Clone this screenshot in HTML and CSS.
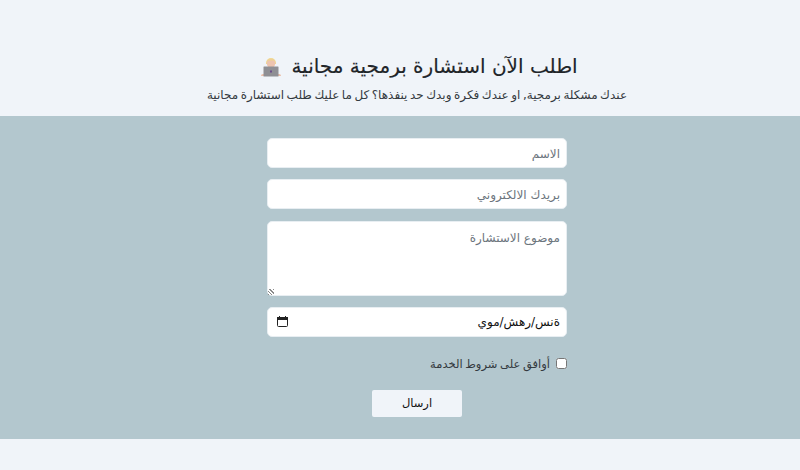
FILE: index.html
```html
<!DOCTYPE html>
<html lang="ar" dir="rtl">
<head>
  <meta charset="UTF-8" />
  <title>استشارة برمجية</title>
  <link rel="stylesheet" href="styles.css">
</head>
<body>

<div class="intro">
  <h1>
    <span>اطلب الآن استشارة برمجية مجانية</span>
    <svg class="coder" width="22" height="22" viewBox="0 0 22 22">
      <path d="M6 8a5 5 0 0 1 10 0v1H6z" fill="#f0d890"/>
      <ellipse cx="11" cy="8.500" rx="4.200" ry="4.500" fill="#edc4b0"/>
      <path d="M6.500 6.500a5 4 0 0 1 9 0l-1.500-1h-6z" fill="#efd68a"/>
      <rect x="8" y="13" width="6" height="2" fill="#e0b09a"/>
      <path d="M1 21a2 2 0 0 1 2-2h16a2 2 0 0 1 2 2z" fill="#eabda8"/>
      <rect x="3.500" y="11.500" width="15" height="10" rx="0.500" fill="#8f8f94"/>
      <rect x="10" y="15.500" width="2" height="2" fill="#6b4c8a"/>
    </svg>
  </h1>
  <p>عندك مشكلة برمجية, او عندك فكرة وبدك حد ينفذها؟ كل ما عليك طلب استشارة مجانية</p>
</div>

<div class="band">
  <form class="consult-form">
    <input class="field" type="text" placeholder="الاسم" />
    <input class="field" type="email" placeholder="بريدك الالكتروني" />
    <textarea class="field area" placeholder="موضوع الاستشارة"></textarea>
    <div class="field date-field">
      <span>ةنس/رهش/موي</span>
      <svg width="11" height="11" viewBox="0 0 11 11">
        <rect x="0.500" y="1.500" width="10" height="9" rx="1" fill="none" stroke="#222"/>
        <rect x="0" y="1" width="11" height="3" fill="#222"/>
        <rect x="2" y="0" width="1" height="2" fill="#222"/>
        <rect x="8" y="0" width="1" height="2" fill="#222"/>
      </svg>
    </div>
    <label class="terms">
      <input type="checkbox" />
      <span>أوافق على شروط الخدمة</span>
    </label>
    <button class="send" type="button">ارسال</button>
  </form>
</div>

</body>
</html>
```

FILE: styles.css
```css
* { box-sizing: border-box; margin: 0; padding: 0; }
body {
  background-color: #f0f4f9;
  font-family: "DejaVu Sans", sans-serif;
  color: #212529;
  height: 470px;
  overflow: hidden;
}
.intro {
  height: 116px;
  padding-top: 50px;
  padding-left: 34px;
  text-align: center;
}
.intro h1 {
  display: flex;
  justify-content: center;
  align-items: center;
  gap: 9px;
  padding-left: 4px;
  font-size: 20px;
  font-weight: 400;
  line-height: 32px;
  -webkit-text-stroke: 0.15px #212529;
}
.intro p {
  font-size: 12px;
  line-height: 26px;
  word-spacing: -1.300px;
  color: #343a40;
}
.band {
  background-color: #b3c7ce;
  height: 323px;
  padding-top: 22px;
  padding-left: 34px;
}
.consult-form {
  width: 300px;
  margin: 0 auto;
  display: flex;
  flex-direction: column;
}
.field {
  display: block;
  width: 300px;
  height: 30px;
  margin-bottom: 11.400px;
  padding: 7px 6px 5px;
  background: #fff;
  border: 1px solid #e8eef2;
  border-radius: 5px;
  font-family: inherit;
  font-size: 12px;
  color: #212529;
  outline: none;
}
.field::placeholder {
  color: #6c757d;
}
.area {
  height: 75px;
  padding-top: 9px;
  resize: vertical;
  direction: rtl;
}
.area::-webkit-resizer {
  background: repeating-linear-gradient(45deg, #8a8a8a 0 1px, #fff 1px 2.400px) left bottom / 6px 6px no-repeat;
}
.date-field {
  display: flex;
  align-items: center;
  justify-content: space-between;
  padding: 0 6px 0 9px;
  font-size: 12px;
  color: #111;
}
.date-field svg {
  margin-bottom: 1px;
}
.terms {
  display: flex;
  align-items: center;
  gap: 6px;
  font-size: 11.500px;
  word-spacing: -1px;
  margin-top: 5px;
  height: 20px;
  color: #343a40;
}
.terms input {
  width: 11px;
  height: 11px;
  margin: 0;
}
.send {
  align-self: center;
  width: 90px;
  height: 27px;
  margin-top: 16px;
  background: #f0f4f9;
  border: none;
  border-radius: 2px;
  font-family: inherit;
  font-size: 11.500px;
  color: #111;
}
```
